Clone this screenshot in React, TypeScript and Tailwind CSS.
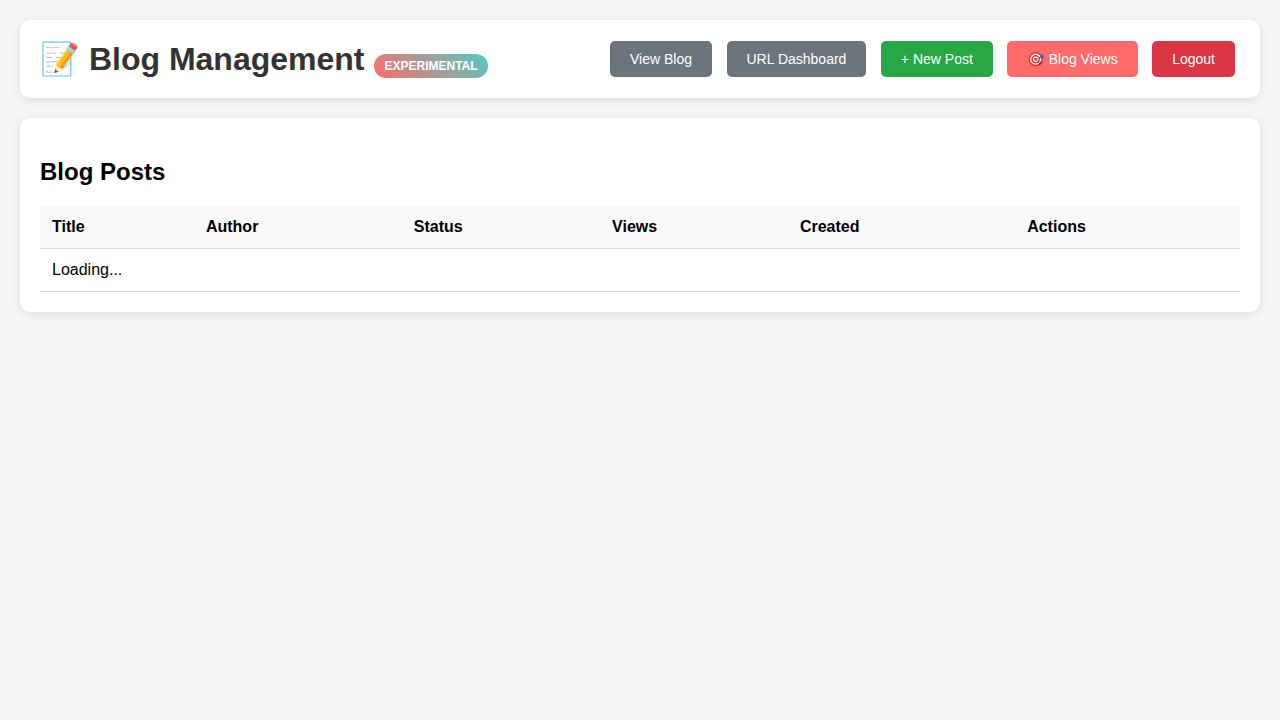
import { Fragment } from 'react';

const buttons = [
  { label: 'View Blog', color: 'bg-[#6c757d]' },
  { label: 'URL Dashboard', color: 'bg-[#6c757d]' },
  { label: '+ New Post', color: 'bg-[#28a745]' },
  { icon: '🎯', label: ' Blog Views', color: 'bg-[#ff6b6b]' },
  { label: 'Logout', color: 'bg-[#dc3545]' },
];

const columns = ['Title', 'Author', 'Status', 'Views', 'Created', 'Actions'];

export default function App() {
  return (
    <div className="min-h-screen bg-[#f5f5f5] p-5 font-['Liberation_Sans',Arial,sans-serif] text-black">
      <header className="mb-5 flex h-[78px] items-center justify-between rounded-[10px] bg-white px-5 shadow-[0_2px_10px_rgba(0,0,0,0.1)]">
        <h1 className="text-[32px] leading-[37px] font-bold whitespace-nowrap text-[#333]">
          📝 Blog Management
          <span className="ml-[10px] inline-block rounded-[15px] bg-[linear-gradient(45deg,#ff6b6b,#4ecdc4)] px-[10px] py-[5px] text-[12px] leading-[14px] font-bold text-white">
            EXPERIMENTAL
          </span>
        </h1>
        <nav className="text-base leading-[18px] whitespace-nowrap">
          {buttons.map((b, i) => (
            <Fragment key={b.label}>
              {i > 0 && ' '}
              <a
                className={`mx-[5px] inline-block rounded-[5px] px-5 py-[10px] text-[14px] leading-4 text-white ${b.color}`}
              >
                {b.icon && <span className="mr-[0.55px]">{b.icon}</span>}
                {b.label}
              </a>
            </Fragment>
          ))}
        </nav>
      </header>
      <main className="h-[194px] rounded-[10px] bg-white px-5 pt-10 shadow-[0_2px_10px_rgba(0,0,0,0.1)]">
        <h2 className="mb-5 text-2xl leading-7 font-bold">Blog Posts</h2>
        <table className="w-full border-collapse text-left text-base leading-[18px]">
          <thead>
            <tr>
              {columns.map((label) => (
                <th key={label} className="border-b border-[#ddd] bg-[#f8f9fa] p-3 font-bold">
                  {label}
                </th>
              ))}
            </tr>
          </thead>
          <tbody>
            <tr>
              <td colSpan={6} className="border-b border-[#ddd] p-3">
                Loading...
              </td>
            </tr>
          </tbody>
        </table>
      </main>
    </div>
  );
}
